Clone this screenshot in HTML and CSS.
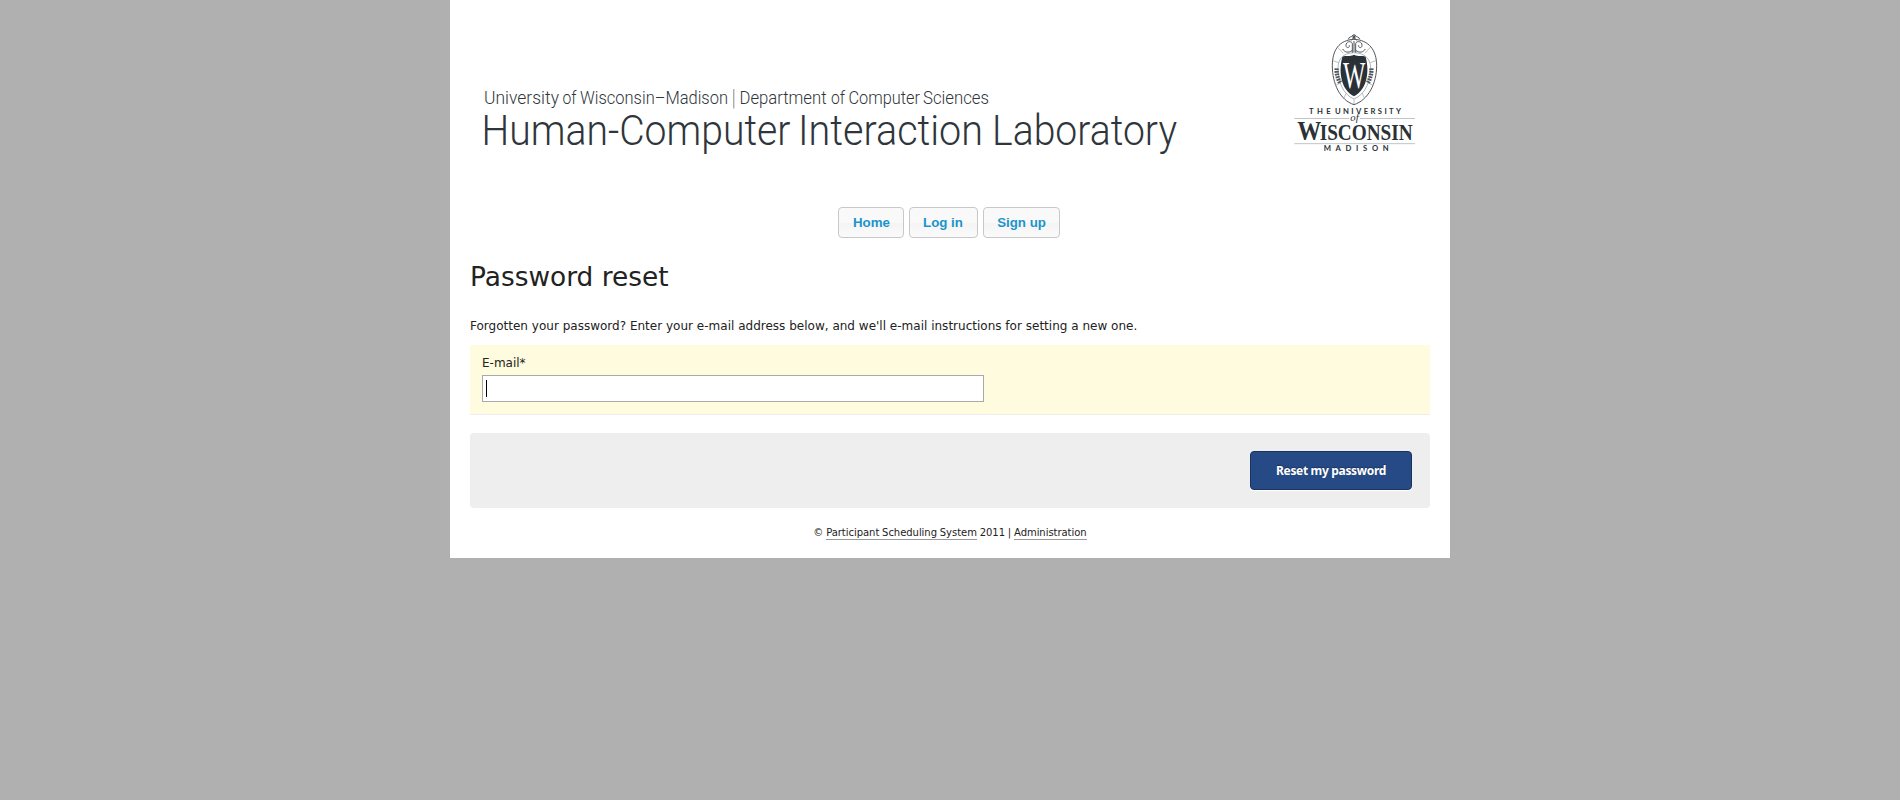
FILE: index.html
```html
<!DOCTYPE html>
<html lang="en">
<head>
<meta charset="utf-8">
<title>Password reset</title>
<link rel="stylesheet" href="styles.css">
</head>
<body>
<div class="page">
  <header class="banner">
    <svg class="wordmark" width="720" height="90" viewBox="470 80 720 90">
      <g class="dept">
        <text x="484" y="103.700" textLength="75" lengthAdjust="spacingAndGlyphs">University</text>
        <text x="562.500" y="103.700" textLength="14" lengthAdjust="spacingAndGlyphs">of</text>
        <text x="580" y="103.700" textLength="148" lengthAdjust="spacingAndGlyphs">Wisconsin–Madison</text>
        <text x="739.500" y="103.700" textLength="87" lengthAdjust="spacingAndGlyphs">Department</text>
        <text x="831" y="103.700" textLength="14" lengthAdjust="spacingAndGlyphs">of</text>
        <text x="848.500" y="103.700" textLength="71.500" lengthAdjust="spacingAndGlyphs">Computer</text>
        <text x="923" y="103.700" textLength="66" lengthAdjust="spacingAndGlyphs">Sciences</text>
      </g>
      <path d="M733.8 89V108.500" stroke="#888b8d"/>
      <g class="lab">
        <text x="481.500" y="144.500" textLength="309" lengthAdjust="spacingAndGlyphs">Human-Computer</text>
        <text x="798" y="144.500" textLength="185" lengthAdjust="spacingAndGlyphs">Interaction</text>
        <text x="992" y="144.500" textLength="185" lengthAdjust="spacingAndGlyphs">Laboratory</text>
      </g>
    </svg>
    <svg class="crest" width="150" height="145" viewBox="0 0 450 435">
      <g fill="none" stroke="#50565a" stroke-width="3">
        <path d="M222 58C177 60 157 91 157 137C157 190 179 240 222 254C265 240 290 190 290 137C290 91 267 60 222 58Z"/>
        <path d="M222 98C187 99 174 119 174 145C174 184 189 224 222 237C255 224 272 184 272 145C272 119 257 99 222 98Z" stroke-width="2" stroke="#8a8e91"/>
        <path d="M217 98V72C217 62 198 62 198 76C198 86 210 84 208 76M227 98V72C227 62 246 62 246 76C246 86 234 84 236 76M217 91C205 100 194 97 188 87M227 91C239 100 250 97 256 87"/>
        <path d="M205 58C207 49 214 52 216 48C219 43 225 43 228 48C230 52 237 49 239 58M213 61L222 53L231 61M222 63V96"/>
        <path d="M173 82L190 100M271 82L254 100M159 122L176 128M288 122L271 128M166 196L181 189M280 196L265 189M191 236L199 219M254 236L246 219M222 238V253" stroke="#9a9ea0" stroke-width="2"/>
        <path d="M170 145C169 160 173 176 181 190M274 145C275 160 271 176 263 190" stroke-width="13" stroke-dasharray="5 3"/>
      </g>
      <circle cx="222" cy="51" r="5" fill="#50565a"/>
      <path d="M222 104C238 112 250 104 257 111C270 158 259 211 222 229C185 211 174 158 187 111C194 104 206 112 222 104Z" fill="#2b3237"/>
      <text class="letter" x="189" y="205" textLength="67" lengthAdjust="spacingAndGlyphs">W</text>
      <g class="university">
        <text class="small" x="87" y="283" textLength="65">THE</text>
        <text class="small" x="165" y="283" textLength="198">UNIVERSITY</text>
        <path d="M43 295.500H207M240 295.500H405M43 371H405" stroke="#b5b8ba" stroke-width="2.500"/>
        <text class="of" x="211" y="304" textLength="25" lengthAdjust="spacingAndGlyphs">of</text>
        <text class="big" x="52" y="360" textLength="72" lengthAdjust="spacingAndGlyphs">W</text>
        <text class="mid" x="119" y="360" textLength="279" lengthAdjust="spacingAndGlyphs">ISCONSIN</text>
        <text class="small" x="131" y="394" textLength="195">MADISON</text>
      </g>
    </svg>
  </header>
  <nav class="nav">
    <a class="tab home">Home</a><a class="tab login">Log in</a><a class="tab signup">Sign up</a>
  </nav>
  <h1 class="title">Password reset</h1>
  <p class="intro">Forgotten your password? Enter your e-mail address below, and we'll e-mail instructions for setting a new one.</p>
  <div class="field">
    <label class="label">E-mail*</label>
    <div class="input"><span class="caret"></span></div>
  </div>
  <div class="actions"><button class="submit">Reset my password</button></div>
  <footer class="footer">© <a class="link">Participant Scheduling System</a> 2011 | <a class="link">Administration</a></footer>
</div>
</body>
</html>
```
FILE: styles.css
```css
* { box-sizing: border-box; }
body { margin: 0; background: #b0b0b0; color: #222; font: 12px/18px "DejaVu Sans", sans-serif; }
.page { width: 1000px; height: 558px; margin: 0 auto; padding: 0 20px; background: #fff; }
.banner { display: flex; height: 207px; }
.wordmark { margin-top: 80px; }
.crest { margin: 20px 0 0 90px; }
.dept, .lab { font-family: Roboto, sans-serif; font-weight: 300; fill: #2f363b; }
.dept { font-size: 17.6px; }
.lab { font-size: 42px; }
.university { fill: #2b3237; font-family: "Liberation Serif", serif; }
.letter { fill: #fff; font: 112px "Liberation Serif", serif; }
.small { font: bold 23px Lato, sans-serif; }
.of { font-size: 30px; font-style: italic; }
.big { font-size: 83px; font-weight: bold; }
.mid { font-size: 71px; font-weight: bold; }
.nav { display: flex; justify-content: center; gap: 5px; height: 31px; padding-right: 2px; }
.tab { height: 31px; border: 1px solid #c8c8c8; border-radius: 4px; background: linear-gradient(#f9f9f9 50%, #f4f4f4 50%, #fafafa); color: #1b94cb; font: bold 13.3px/30px "Liberation Sans", sans-serif; text-align: center; }
.home { width: 66px; padding-left: 1px; }
.login { width: 69px; padding-right: 1px; }
.signup { width: 77px; }
.title { margin: 21px 0 0; font-size: 26.4px; line-height: 36px; font-weight: normal; }
.intro { margin: 22px 0 0; line-height: 18px; letter-spacing: 0.01px; }
.field { height: 70px; margin-top: 10px; padding: 9px 12px 0; border-bottom: 1px solid #eee; background: #fffbdf; }
.label { display: block; height: 21px; line-height: 18px; }
.input { width: 502px; height: 27px; padding: 4px 3px; border: 1px solid #a9a9a9; background: #fff; }
.caret { display: block; width: 1px; height: 17px; background: #000; }
.actions { display: flex; justify-content: flex-end; height: 75px; margin-top: 18px; padding: 18px; border-radius: 4px; background: #eee; }
.submit { width: 162px; height: 39px; padding: 0; border: 1px solid #18345f; border-radius: 4px; background: #264a85; color: #fff; box-shadow: 0 1px 0 #fff; font: bold 12px/36px "Noto Sans", sans-serif; letter-spacing: -0.33px; text-shadow: 0 -1px 1px #1a3460; }
.footer { margin-top: 16px; text-align: center; font-size: 10px; line-height: 18px; letter-spacing: -0.04px; word-spacing: -0.3px; }
.link { padding-bottom: 1px; border-bottom: 1px solid #999; }
```
